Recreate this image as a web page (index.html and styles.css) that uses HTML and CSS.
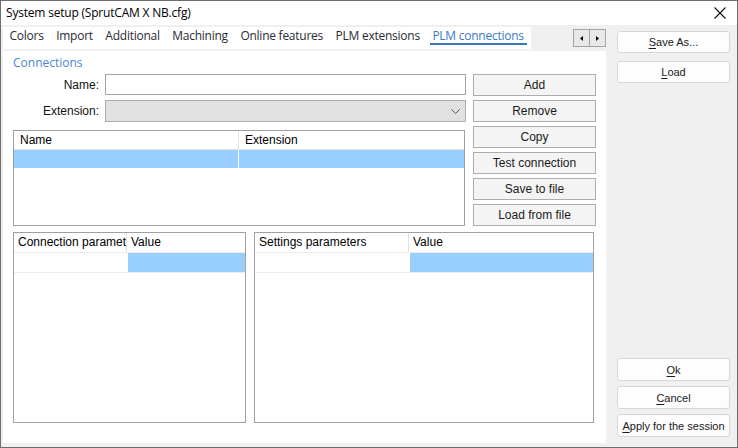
FILE: index.html
```html
<!DOCTYPE html>
<html>
<head>
<meta charset="utf-8">
<link rel="stylesheet" href="styles.css">
</head>
<body>
<div class="window">
  <div class="titlebar">
    <span class="title">System setup (SprutCAM X NB.cfg)</span>
    <svg class="close" width="12" height="12" viewBox="0 0 12 12"><path d="M0.5 0.5 L11.5 11.5 M11.5 0.5 L0.5 11.5" stroke="#111" stroke-width="1.1" fill="none"/></svg>
  </div>
  <div class="body">
    <div class="main">
      <div class="tabrow">
        <div class="tabs">
          <span class="tab">Colors</span>
          <span class="tab">Import</span>
          <span class="tab">Additional</span>
          <span class="tab">Machining</span>
          <span class="tab">Online features</span>
          <span class="tab">PLM extensions</span>
          <span class="tab active">PLM connections</span>
        </div>
        <div class="tabscroll">
          <span class="sbtn"><svg width="3" height="5" viewBox="0 0 3 5"><path d="M3 0 L0 2.5 L3 5 Z" fill="#000"/></svg></span>
          <span class="sbtn"><svg width="3" height="5" viewBox="0 0 3 5"><path d="M0 0 L3 2.5 L0 5 Z" fill="#000"/></svg></span>
        </div>
      </div>
      <div class="page">
        <div class="group-title">Connections</div>
        <div class="top">
          <div class="top-left">
            <div class="field"><span class="lbl">Name:</span><div class="input"></div></div>
            <div class="field"><span class="lbl">Extension:</span><div class="select"><svg width="9" height="5" viewBox="0 0 9 5"><path d="M0.5 0.5 L4.5 4.5 L8.5 0.5" stroke="#555" stroke-width="1" fill="none"/></svg></div></div>
            <div class="list">
              <div class="lrow head"><div class="cell c1">Name</div><div class="cell c2">Extension</div></div>
              <div class="lrow sel"><div class="cell c1"></div><div class="cell c2"></div></div>
            </div>
          </div>
          <div class="actions">
            <button class="btn">Add</button>
            <button class="btn">Remove</button>
            <button class="btn">Copy</button>
            <button class="btn">Test connection</button>
            <button class="btn">Save to file</button>
            <button class="btn">Load from file</button>
          </div>
        </div>
        <div class="bottom">
          <div class="grid g-left">
            <div class="grow ghead"><div class="gcell gc1"><span class="clip">Connection parameters</span></div><div class="gcell gc2">Value</div></div>
            <div class="grow gsel"><div class="gcell gc1"></div><div class="gcell gc2"></div></div>
          </div>
          <div class="grid g-right">
            <div class="grow ghead"><div class="gcell gc1">Settings parameters</div><div class="gcell gc2">Value</div></div>
            <div class="grow gsel"><div class="gcell gc1"></div><div class="gcell gc2"></div></div>
          </div>
        </div>
      </div>
    </div>
    <div class="side">
      <div class="side-group">
        <button class="sbutton"><u>S</u>ave As...</button>
        <button class="sbutton"><u>L</u>oad</button>
      </div>
      <div class="side-group bottom-group">
        <button class="sbutton tall"><u>O</u>k</button>
        <button class="sbutton tall"><u>C</u>ancel</button>
        <button class="sbutton tall"><u>A</u>pply for the session</button>
      </div>
    </div>
  </div>
</div>
</body>
</html>
```

FILE: styles.css
```css
html, body {
  margin: 0;
  padding: 0;
  background: #f0f0f0;
}

.window {
  width: 738px;
  height: 448px;
  box-sizing: border-box;
  border: 1px solid #6e6e6e;
  display: flex;
  flex-direction: column;
  background: #f0f0f0;
  font-family: "Liberation Sans", Arial, sans-serif;
  font-size: 12px;
  color: #1a1a1a;
}

.titlebar {
  height: 24px;
  background: #fff;
  display: flex;
  align-items: flex-start;
  padding: 4px 0 0 5px;
  box-sizing: border-box;
}

.title {
  font-family: "Open Sans", "Noto Sans", sans-serif;
  font-size: 12px;
  line-height: 16px;
  letter-spacing: -0.2px;
  color: #000;
}

.close {
  margin-left: auto;
  margin-right: 11px;
  margin-top: 2px;
}

.body {
  flex: 1;
  display: flex;
  padding: 2px 0 4px 2px;
  min-height: 0;
}

.main {
  width: 603px;
  display: flex;
  flex-direction: column;
}

.tabrow {
  height: 22px;
  display: flex;
  margin-bottom: 2px;
}

.tabs {
  display: flex;
  background: #fff;
  padding-right: 1px;
}

.tab {
  position: relative;
  padding: 0 6px 0 6.5px;
  font-family: "Open Sans", "Noto Sans", sans-serif;
  font-size: 12px;
  line-height: 17px;
  letter-spacing: -0.25px;
  color: #2a2a33;
  white-space: nowrap;
}

.tab.active {
  color: #3a7bc8;
}

.tab.active::after {
  content: "";
  position: absolute;
  left: 4px;
  right: 3px;
  top: 16px;
  height: 2px;
  background: #3a78b8;
}

.tabscroll {
  flex: 1;
  display: flex;
  justify-content: flex-end;
  align-items: flex-start;
  padding-top: 2px;
}

.sbtn {
  width: 17px;
  height: 18px;
  box-sizing: border-box;
  border: 1px solid #a3a3a3;
  background: #e8e8e8;
  display: flex;
  align-items: center;
  justify-content: center;
}

.sbtn + .sbtn {
  margin-left: -1px;
}

.page {
  flex: 1;
  background: #fff;
  padding: 3px 10px 0 10px;
  display: flex;
  flex-direction: column;
}

.group-title {
  font-family: "Open Sans", "Noto Sans", sans-serif;
  font-size: 12px;
  line-height: 17px;
  color: #4a86d0;
}

.top {
  display: flex;
  margin-top: 3px;
  gap: 7px;
}

.top-left {
  width: 453px;
  display: flex;
  flex-direction: column;
}

.field {
  display: flex;
  align-items: center;
  gap: 6px;
}

.field + .field {
  margin-top: 5px;
}

.lbl {
  width: 86px;
  text-align: right;
  color: #111;
}

.input {
  flex: 1;
  height: 21px;
  box-sizing: border-box;
  border: 1px solid #a5a5a5;
  background: #fff;
}

.select {
  flex: 1;
  height: 22px;
  box-sizing: border-box;
  border: 1px solid #adadad;
  background: #e1e1e1;
  display: flex;
  align-items: center;
  justify-content: flex-end;
  padding-right: 5px;
}

.list {
  margin-top: 8px;
  width: 452px;
  height: 96px;
  box-sizing: border-box;
  border: 1px solid #a0a0a0;
  background: #fff;
}

.lrow {
  display: flex;
  height: 18px;
}

.lrow.head {
  border-bottom: 1px solid #e3e3e3;
  height: 18px;
}

.cell {
  line-height: 18px;
  padding-left: 6px;
  box-sizing: border-box;
  white-space: nowrap;
  overflow: hidden;
  color: #000;
}

.c1 {
  width: 225px;
  border-right: 1px solid #e3e3e3;
}

.c2 {
  flex: 1;
}

.lrow.sel .cell {
  background: #99cfff;
}

.lrow.sel .c1 {
  border-right: 1px solid #fff;
}

.actions {
  width: 123px;
  display: flex;
  flex-direction: column;
  gap: 4px;
}

.btn {
  height: 22px;
  box-sizing: border-box;
  border: 1px solid #adadad;
  background: #f4f4f4;
  font-family: "Liberation Sans", Arial, sans-serif;
  font-size: 12px;
  color: #1a1a1a;
  padding: 0;
  margin: 0;
}

.bottom {
  display: flex;
  margin-top: 6px;
  gap: 8px;
}

.grid {
  height: 191px;
  box-sizing: border-box;
  border: 1px solid #a0a0a0;
  background: #fff;
}

.g-left {
  width: 233px;
}

.g-right {
  width: 340px;
}

.grow {
  display: flex;
  height: 19px;
  border-bottom: 1px solid #ececec;
}

.gcell {
  line-height: 18px;
  padding-left: 4px;
  box-sizing: border-box;
  white-space: nowrap;
  overflow: hidden;
  color: #000;
}

.clip {
  display: block;
  overflow: hidden;
  width: 108px;
}

.g-left .gc1 {
  width: 113px;
  border-right: 1px solid #e3e3e3;
}

.g-right .gc1 {
  width: 154px;
  border-right: 1px solid #e3e3e3;
}

.gc2 {
  flex: 1;
}

.gsel .gc2 {
  background: #99cfff;
}

.gsel .gc1 {
  border-right: none;
  width: 114px;
}

.g-right .gsel .gc1 {
  width: 155px;
}

.side {
  flex: 1;
  display: flex;
  flex-direction: column;
  justify-content: space-between;
  padding: 4px 6px 6px 11px;
}

.side-group {
  display: flex;
  flex-direction: column;
  gap: 8px;
}

.bottom-group {
  gap: 5px;
}

.sbutton {
  width: 113px;
  height: 22px;
  box-sizing: border-box;
  border: 1px solid #d6d6d6;
  border-radius: 3px;
  background: #fdfdfd;
  font-family: "Liberation Sans", Arial, sans-serif;
  font-size: 11px;
  color: #1a1a1a;
  padding: 0;
  margin: 0;
}

.sbutton.tall {
  height: 23px;
}

.sbutton u {
  text-underline-offset: 2px;
}
```
